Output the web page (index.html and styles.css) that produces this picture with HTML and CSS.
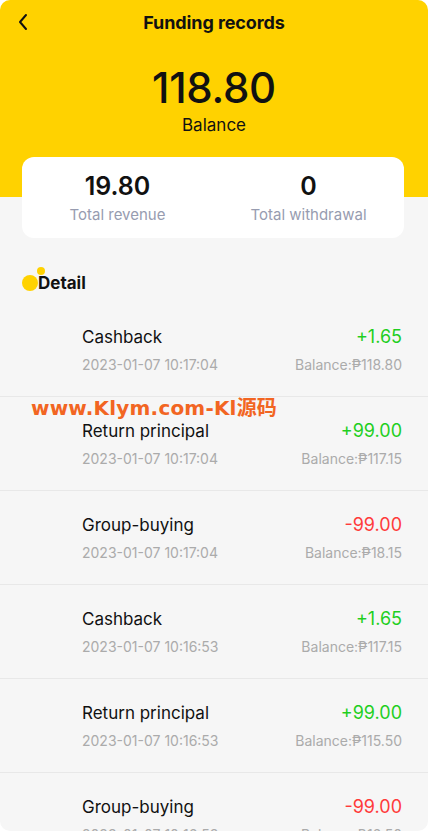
FILE: index.html
```html
<!DOCTYPE html>
<html lang="en">
<head>
<meta charset="utf-8">
<title>Funding records</title>
<link rel="stylesheet" href="styles.css">
</head>
<body>
<div class="page">
  <div class="top">
    <div class="nav">
      <svg class="back" width="12" height="18" viewBox="0 0 12 18"><path d="M9 2 L3 9 L9 16" fill="none" stroke="#111" stroke-width="2" stroke-linecap="round" stroke-linejoin="round"/></svg>
      <div class="nav-title">Funding records</div>
    </div>
    <div class="balance">
      <div class="balance-num">118.80</div>
      <div class="balance-label">Balance</div>
    </div>
    <div class="card">
      <div class="stat">
        <div class="stat-num">19.80</div>
        <div class="stat-label">Total revenue</div>
      </div>
      <div class="stat">
        <div class="stat-num">0</div>
        <div class="stat-label">Total withdrawal</div>
      </div>
    </div>
  </div>
  <div class="detail-head">
    <span class="dot-big"></span><span class="dot-small"></span>
    <span class="detail-title">Detail</span>
  </div>
  <div class="list">
    <div class="row">
      <div class="row-line"><span class="row-title">Cashback</span><span class="amt plus">+1.65</span></div>
      <div class="row-line sub"><span>2023-01-07 10:17:04</span><span>Balance:₱118.80</span></div>
    </div>
    <div class="row">
      <div class="row-line"><span class="row-title">Return principal</span><span class="amt plus">+99.00</span></div>
      <div class="row-line sub"><span>2023-01-07 10:17:04</span><span>Balance:₱117.15</span></div>
    </div>
    <div class="row">
      <div class="row-line"><span class="row-title">Group-buying</span><span class="amt minus">-99.00</span></div>
      <div class="row-line sub"><span>2023-01-07 10:17:04</span><span>Balance:₱18.15</span></div>
    </div>
    <div class="row">
      <div class="row-line"><span class="row-title">Cashback</span><span class="amt plus">+1.65</span></div>
      <div class="row-line sub"><span>2023-01-07 10:16:53</span><span>Balance:₱117.15</span></div>
    </div>
    <div class="row">
      <div class="row-line"><span class="row-title">Return principal</span><span class="amt plus">+99.00</span></div>
      <div class="row-line sub"><span>2023-01-07 10:16:53</span><span>Balance:₱115.50</span></div>
    </div>
    <div class="row">
      <div class="row-line"><span class="row-title">Group-buying</span><span class="amt minus">-99.00</span></div>
      <div class="row-line sub"><span>2023-01-07 10:16:53</span><span>Balance:₱16.50</span></div>
    </div>
  </div>
  <div class="watermark">www.Klym.com-Kl源码</div>
</div>
</body>
</html>
```

FILE: styles.css
```css
* { box-sizing: border-box; }
html, body { margin: 0; padding: 0; background: #ffffff; }
body { font-family: Inter, Roboto, "Noto Sans CJK SC", sans-serif; color: #111; }
.page {
  position: relative;
  width: 428px;
  height: 831px;
  background: #f6f6f6;
  border-radius: 10px;
  overflow: hidden;
}
.top {
  background: linear-gradient(#ffd200 0, #ffd200 197px, transparent 197px);
}
.nav {
  position: relative;
  height: 44px;
  display: flex;
  align-items: center;
  justify-content: center;
}
.back { position: absolute; left: 17px; top: 13px; }
.nav-title { font-size: 18px; font-weight: 700; letter-spacing: -0.1px; }
.balance {
  margin-top: 20px;
  display: flex;
  flex-direction: column;
  align-items: center;
}
.balance-num { font-size: 42px; line-height: 48px; font-weight: 500; letter-spacing: -0.3px; }
.balance-label { font-size: 17px; line-height: 22px; margin-top: 2px; }
.card {
  margin: 21px 24px 0 22px;
  height: 81px;
  background: #fff;
  border-radius: 12px;
  display: grid;
  grid-template-columns: 1fr 1fr;
  padding-top: 14px;
}
.stat { display: flex; flex-direction: column; align-items: center; }
.stat-num { font-size: 25px; line-height: 30px; font-weight: 600; }
.stat-label { font-size: 15px; line-height: 20px; margin-top: 4px; color: #979cb0; }
.detail-head {
  position: relative;
  margin-top: 33px;
  height: 24px;
  padding-left: 38px;
}
.detail-title { font-size: 17px; line-height: 24px; font-weight: 700; }
.dot-big {
  position: absolute; left: 22px; top: 4px;
  width: 16px; height: 16px; border-radius: 50%; background: #ffd200;
}
.dot-small {
  position: absolute; left: 37px; top: -4px;
  width: 8px; height: 8px; border-radius: 50%; background: #ffd200;
}
.list { margin-top: 8px; }
.row {
  height: 94px;
  padding: 22px 26px 0 82px;
  border-bottom: 1px solid #e8e8e8;
}
.row-line { display: flex; justify-content: space-between; align-items: center; }
.row-title { font-size: 17px; line-height: 24px; }
.amt { font-size: 18px; line-height: 24px; }
.plus { color: #1fcf1f; }
.minus { color: #ff3b3b; }
.sub { margin-top: 6px; font-size: 14px; line-height: 20px; color: #ababab; }
.watermark {
  position: absolute;
  left: 31px;
  top: 395px;
  font-family: "DejaVu Sans", "Noto Sans CJK SC", sans-serif;
  font-size: 20px;
  line-height: 26px;
  font-weight: 700;
  color: #f26522;
  letter-spacing: 0.2px;
}
```
